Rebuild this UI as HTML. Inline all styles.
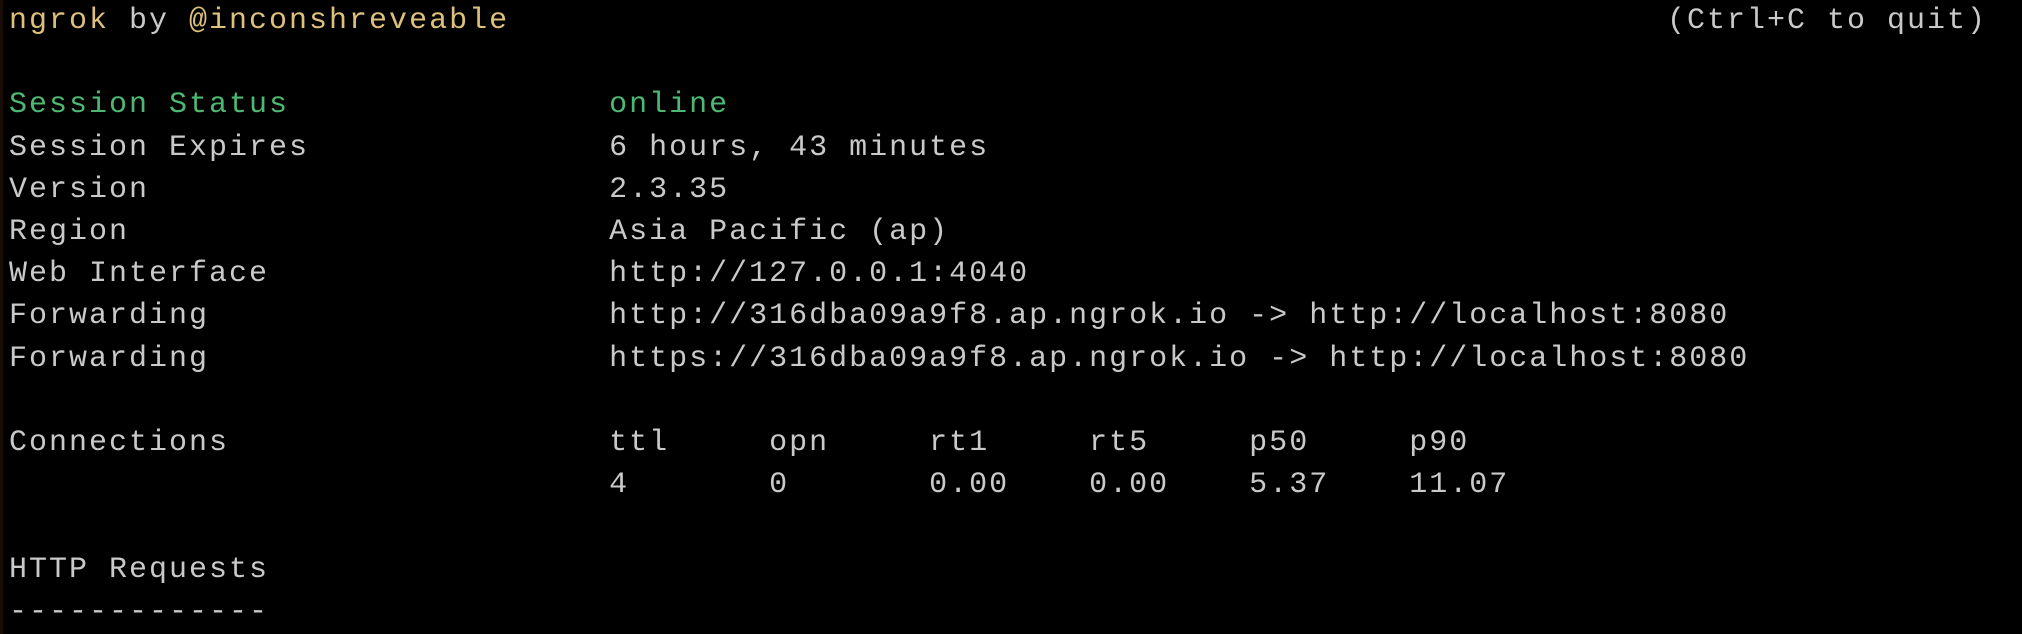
<!DOCTYPE html>
<html><head><meta charset="utf-8"><style>
html,body{margin:0;padding:0;background:#000;width:2022px;height:634px;overflow:hidden}
body{position:relative;border-left:3px solid #1a0c06;box-sizing:border-box}
pre,#q{position:absolute;margin:0;font-family:"Liberation Mono",monospace;font-size:30px;letter-spacing:2px;line-height:42.2px;color:#c9c9c9;top:0px;white-space:pre}
pre{left:6px}
.y{color:#dcc07c}.g{color:#4db873}
#q{left:1664px}
</style></head><body>
<pre><span class="y">ngrok</span> by <span class="y">@inconshreveable</span>

<span class="g">Session Status                online</span>
Session Expires               6 hours, 43 minutes
Version                       2.3.35
Region                        Asia Pacific (ap)
Web Interface                 http://127.0.0.1:4040
Forwarding                    http://316dba09a9f8.ap.ngrok.io -&gt; http://localhost:8080
Forwarding                    https://316dba09a9f8.ap.ngrok.io -&gt; http://localhost:8080

Connections                   ttl     opn     rt1     rt5     p50     p90
                              4       0       0.00    0.00    5.37    11.07

HTTP Requests
-------------</pre>
<div id="q">(Ctrl+C to quit)</div>
</body></html>
